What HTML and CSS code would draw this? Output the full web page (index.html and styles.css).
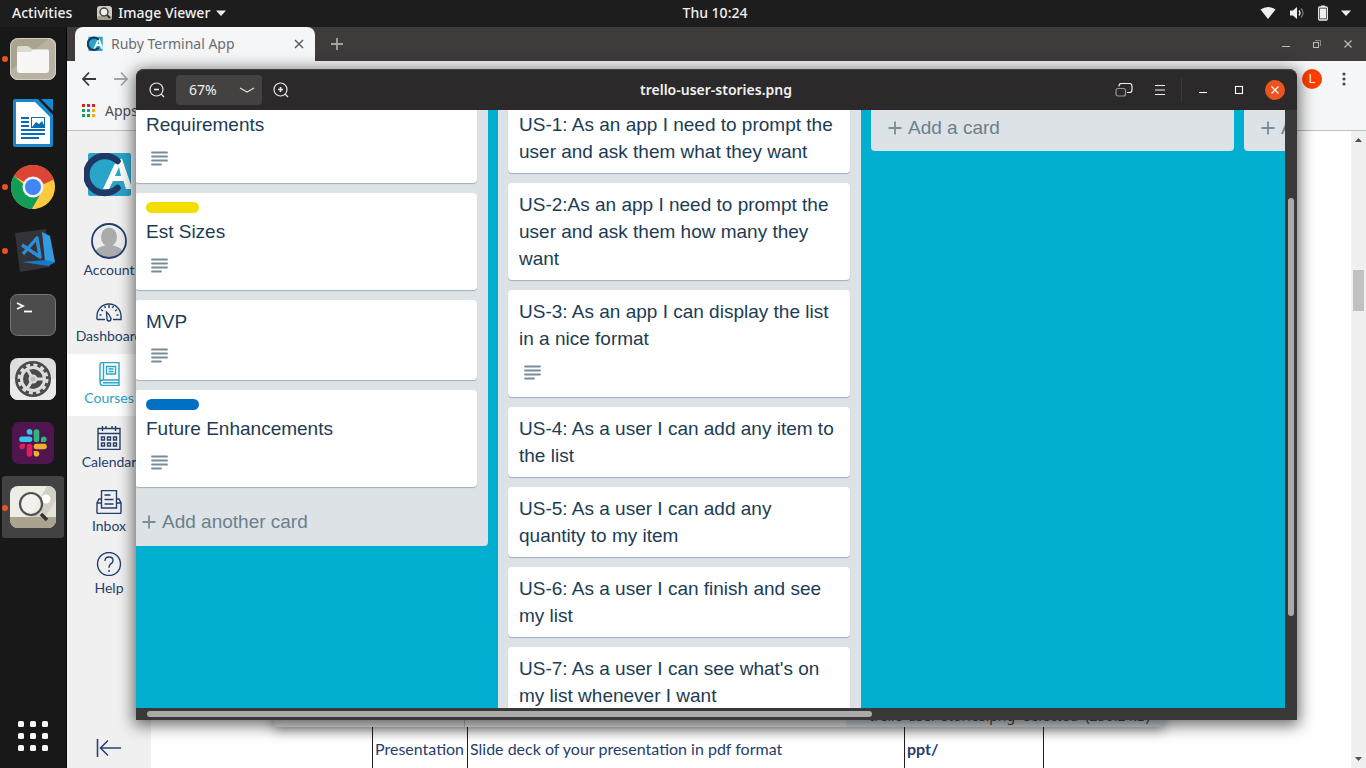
FILE: index.html
```html
<!DOCTYPE html>
<html lang="en">
<head>
<meta charset="utf-8">
<title>Desktop</title>
<link rel="stylesheet" href="styles.css">
</head>
<body>
<svg class="defs" aria-hidden="true">
  <symbol id="i-lines" viewBox="0 0 18 16"><path d="M1 1.500h15M1 5.500h15M1 9.500h15M1 13.500h9" stroke="#798d99" stroke-width="1.800" stroke-linecap="round"/></symbol>
  <symbol id="i-plus" viewBox="0 0 14 14"><path d="M7 0.500v13M0.500 7h13" stroke="#798d99" stroke-width="1.800"/></symbol>
  <symbol id="i-logo" viewBox="0 0 48 44">
    <rect x="4" y="0" width="43" height="43" rx="2" fill="#29a5c9"/>
    <path d="M19 36 33 6h5l9 26v4h-5l-2.500-8H29l-4 8z" fill="#fff"/><path d="M31 23h6l-2-9z" fill="#29a5c9"/>
    <path d="M33.500 8A18.500 18.500 0 1 0 33.500 35" fill="none" stroke="#1f3864" stroke-width="6.500" stroke-linecap="round"/>
  </symbol>
</svg>

<header class="topbar">
  <div class="topbar-left">
    <button class="bar-btn">Activities</button>
    <button class="bar-btn app-menu">
      <svg width="16" height="16" viewBox="0 0 16 16"><rect x="1" y="1" width="15" height="14" rx="3" fill="#cfcbc0"/><rect x="1" y="11" width="15" height="4" rx="2" fill="#a59f8e"/><circle cx="8" cy="7" r="4" fill="#eee" stroke="#444" stroke-width="1.500"/><path d="m11 10 3 3" stroke="#333" stroke-width="2"/></svg>
      Image Viewer
      <svg width="10" height="6" viewBox="0 0 10 6"><path d="M0 0.500h10L5 6z" fill="#eee"/></svg>
    </button>
  </div>
  <time class="clock">Thu 10:24</time>
  <div class="tray">
    <svg width="16" height="14" viewBox="0 0 16 14"><path d="M0.500 3.500Q8-1.500 15.500 3.500L8 13z" fill="#f0f0f0"/></svg>
    <svg width="16" height="14" viewBox="0 0 16 14"><path d="M1 4.500h3L8 1v12L4 9.500H1z" fill="#f0f0f0"/><path d="M10 4.500q2 2.500 0 5" fill="none" stroke="#eee" stroke-width="1.300"/><path d="M12 2.500q4 4.500 0 9" fill="none" stroke="#777" stroke-width="1.300"/></svg>
    <svg width="10" height="16" viewBox="0 0 10 16"><rect x="0.700" y="2" width="8.600" height="13" rx="1" fill="none" stroke="#eee" stroke-width="1.300"/><path d="M3 0.500h4V2H3zM2 3.500h6v10H2z" fill="#eee"/></svg>
    <svg width="10" height="6" viewBox="0 0 10 6"><path d="M0 0.500h10L5 6z" fill="#eee"/></svg>
  </div>
</header>

<div class="desktop">
  <nav class="dock" aria-label="Dock">
    <button class="dock-item running" aria-label="Files">
      <svg width="48" height="44" viewBox="0 0 48 44"><rect x="1" y="1" width="46" height="42" rx="8" fill="#aaa48f"/><path d="M1 34 40 1h1a7 7 0 0 1 6 8v26a8 8 0 0 1-8 8H9a8 8 0 0 1-8-8z" fill="#b7b2a1"/><rect x="1.500" y="1.500" width="45" height="41" rx="8" fill="none" stroke="#d4d0c2"/><path d="M8 11q0-2 2-2h9l4 3h15q2 0 2 2v6H8z" fill="#dcd9cf"/><path d="M8 15h14l2-2h14q2 0 2 2v18q0 3-3 3H11q-3 0-3-3z" fill="#f8f7f5"/></svg>
    </button>
    <button class="dock-item" aria-label="Writer">
      <svg width="40" height="48" viewBox="0 0 40 48"><path d="M2 0h23l15 16v30q0 2-2 2H2q-2 0-2-2V2q0-2 2-2z" fill="#1787cf"/><path d="M3 3h19l15 15v27H3z" fill="#fff"/><path d="M28 0h12v12z" fill="#1787cf"/><path d="M8 19h8M8 23h8M8 27h8M8 31h24M8 35h24M8 39h18" stroke="#0b6cb3" stroke-width="1.800"/><rect x="18.500" y="18.500" width="13" height="10" fill="#fff" stroke="#0b6cb3"/><path d="m19 28 4-5 3 2 3-3 3 6z" fill="#0b6cb3"/></svg>
    </button>
    <button class="dock-item running" aria-label="Chrome">
      <svg width="46" height="46" viewBox="0 0 46 46"><circle cx="23" cy="23" r="22" fill="#fdca3f"/><path d="M23 23 3.900 12A22 22 0 0 1 42.100 12z" fill="#dc4437"/><path d="M3.900 12A22 22 0 0 0 22 45l10.500-17H23z" fill="#129c58"/><path d="M23 12h19l1.600 3.600L34 20z" fill="#dc4437"/><path d="m31.600 28-9.600 17h4l8-19z" fill="#fdca3f"/><circle cx="23" cy="23" r="10.500" fill="#f2f2f2"/><circle cx="23" cy="23" r="8" fill="#4285f4"/></svg>
    </button>
    <button class="dock-item running" aria-label="Visual Studio Code">
      <svg width="44" height="46" viewBox="0 0 44 46"><path d="m4 5 31-4 4 38-30 5z" fill="#343338"/><path d="m31 4 8 4 5 26-7 4-3-5z" fill="#359be0"/><path d="m11 34 26 4 7-4-10-2z" fill="#1879c9"/><path d="m11 17 18 12-3-19-14 16" fill="none" stroke="#2a8fd8" stroke-width="3.400" stroke-linejoin="round"/></svg>
    </button>
    <button class="dock-item" aria-label="Terminal">
      <svg width="48" height="44" viewBox="0 0 48 44"><rect x="1.500" y="1.500" width="45" height="41" rx="7" fill="#4c4c4c" stroke="#777"/><path d="m8 10 6 3-6 3" fill="none" stroke="#fff" stroke-width="1.800"/><path d="M15 18.500h8" stroke="#fff" stroke-width="1.800"/></svg>
    </button>
    <button class="dock-item" aria-label="Settings">
      <svg width="48" height="44" viewBox="0 0 48 44"><rect x="1" y="1" width="46" height="42" rx="8" fill="#dedede"/><path d="M1 22h46v13a8 8 0 0 1-8 8H9a8 8 0 0 1-8-8z" fill="#ebebeb"/><circle cx="24" cy="22" r="18" fill="#4a4a4a"/><circle cx="24" cy="22" r="14" fill="none" stroke="#ddd" stroke-width="3" stroke-dasharray="4 3.330"/><circle cx="24" cy="22" r="11.500" fill="none" stroke="#ddd" stroke-width="3"/><circle cx="24" cy="22" r="4.500" fill="#ddd"/><path d="M24 22 18 12M24 22 18 32M24 22h12" stroke="#ddd" stroke-width="3"/><circle cx="24" cy="22" r="2.500" fill="#bbb"/></svg>
    </button>
    <button class="dock-item" aria-label="Slack">
      <svg width="42" height="42" viewBox="0 0 42 42"><rect width="42" height="42" rx="7" fill="#4f154f"/><g stroke-width="5.600" stroke-linecap="round"><path d="M10 17.300h7.500" stroke="#36c5f0"/><path d="M24.500 10v7.500" stroke="#2eb67d"/><path d="M24.500 24.500H32" stroke="#ecb22e"/><path d="M17.500 24.500V32" stroke="#e01e5a"/></g><path d="M20.300 12.500h-2.800a2.800 2.800 0 1 1 2.800-2.800z" fill="#36c5f0"/><path d="M29 20v-2.800a2.800 2.800 0 1 1 2.800 2.800z" fill="#2eb67d"/><path d="M21.700 29h2.800a2.800 2.800 0 1 1-2.800 2.800z" fill="#ecb22e"/><path d="M13 21.700v2.800a2.800 2.800 0 1 1-2.800-2.800z" fill="#e01e5a"/></svg>
    </button>
    <button class="dock-item running active" aria-label="Image Viewer">
      <svg width="48" height="44" viewBox="0 0 48 44"><rect x="1" y="1" width="46" height="42" rx="8" fill="#edece5"/><path d="M21 32 38 1h2a8 8 0 0 1 7 8v23z" fill="#d2cfc4"/><path d="m36 32 11-17v17z" fill="#e4e1d8"/><circle cx="37" cy="14" r="4.500" fill="#fff"/><path d="M1 32h46v3a8 8 0 0 1-8 8H9a8 8 0 0 1-8-8z" fill="#aaa38f"/><circle cx="22" cy="19" r="11" fill="#f4f3ef" fill-opacity=".8" stroke="#505050" stroke-width="2.200"/><path d="m32 29 6 6" stroke="#333" stroke-width="3.600"/></svg>
    </button>
    <button class="dock-item dock-apps" aria-label="Show applications">
      <svg width="32" height="32" viewBox="0 0 32 32" fill="#f7f7f7"><rect x="1" y="1" width="6" height="6" rx="1.500"/><rect x="13" y="1" width="6" height="6" rx="1.500"/><rect x="25" y="1" width="6" height="6" rx="1.500"/><rect x="1" y="13" width="6" height="6" rx="1.500"/><rect x="13" y="13" width="6" height="6" rx="1.500"/><rect x="25" y="13" width="6" height="6" rx="1.500"/><rect x="1" y="25" width="6" height="6" rx="1.500"/><rect x="13" y="25" width="6" height="6" rx="1.500"/><rect x="25" y="25" width="6" height="6" rx="1.500"/></svg>
    </button>
  </nav>

  <section class="browser" aria-label="Browser">
    <div class="tabstrip">
      <div class="tab">
        <svg width="16" height="16"><use href="#i-logo"/></svg>
        <span class="tab-title">Ruby Terminal App</span>
        <button class="icon-btn" aria-label="Close tab"><svg width="10" height="10" viewBox="0 0 10 10"><path d="m1 1 8 8M9 1 1 9" stroke="#5f6368" stroke-width="1.600"/></svg></button>
      </div>
      <button class="icon-btn new-tab" aria-label="New tab"><svg width="12" height="12" viewBox="0 0 12 12"><path d="M6 0v12M0 6h12" stroke="#a5a3a2" stroke-width="1.800"/></svg></button>
      <div class="win-controls">
        <button aria-label="Minimise"><svg width="10" height="10" viewBox="0 0 10 10"><path d="M1 7.500h8" stroke="#bbb"/></svg></button>
        <button aria-label="Restore"><svg width="10" height="10" viewBox="0 0 10 10" fill="none"><path d="M3 1.500h5.500V7" stroke="#888"/><rect x="1.500" y="3.500" width="5" height="5" stroke="#bbb"/></svg></button>
        <button aria-label="Close"><svg width="10" height="10" viewBox="0 0 10 10"><path d="m1.500 1.500 7 7M8.500 1.500l-7 7" stroke="#bbb" stroke-width="1.300"/></svg></button>
      </div>
    </div>
    <div class="toolbar">
      <button class="icon-btn" aria-label="Back"><svg width="16" height="16" viewBox="0 0 16 16"><path d="M8 1.500 2 8l6 6.500M2 8h13" fill="none" stroke="#36393d" stroke-width="1.800"/></svg></button>
      <button class="icon-btn" aria-label="Forward"><svg width="16" height="16" viewBox="0 0 16 16"><path d="m8 1.500 6 6.500-6 6.500M14 8H1" fill="none" stroke="#a4a5a7" stroke-width="1.800"/></svg></button>
      <span class="avatar">L</span>
      <button class="icon-btn" aria-label="Menu"><svg width="4" height="14" viewBox="0 0 4 14" fill="#474a4d"><circle cx="2" cy="2" r="1.600"/><circle cx="2" cy="7" r="1.600"/><circle cx="2" cy="12" r="1.600"/></svg></button>
    </div>
    <div class="bookmarks">
      <a href="#" class="bookmark">
        <svg width="14" height="14" viewBox="0 0 14 14"><path d="M0 0h3v3H0zM5 0h3v3H5zM10 0h3v3h-3z" fill="#ea1c1c"/><path d="M0 5h3v3H0zM0 10h3v3H0z" fill="#13a05a"/><path d="M5 5h3v3H5z" fill="#3b7df0"/><path d="M5 10h3v3H5z" fill="#13a05a"/><path d="M10 5h3v3h-3zM10 10h3v3h-3z" fill="#fbab05"/></svg>
        Apps
      </a>
    </div>
    <div class="page">
      <nav class="sidebar" aria-label="Global navigation">
        <a href="#" class="brand" aria-label="Home"><svg width="48" height="44"><use href="#i-logo"/></svg></a>
        <a href="#" class="side-item account"><svg width="36" height="36" viewBox="0 0 36 36"><clipPath id="c"><circle cx="18" cy="18" r="17"/></clipPath><circle cx="18" cy="18" r="17" fill="#ececec"/><g clip-path="url(#c)" fill="#ababab"><ellipse cx="18" cy="14" rx="8" ry="9.500"/><ellipse cx="18" cy="34" rx="16" ry="12"/></g><circle cx="18" cy="18" r="17" fill="none" stroke="#243e6c" stroke-width="1.800"/></svg>Account</a>
        <a href="#" class="side-item"><svg class="ic" viewBox="0 0 26 24"><path d="M1 19.500V16A12 12 0 0 1 25 16v3.500h-8M1 19.500h8"/><path d="M13 5v3M5 9.500l2 1.500M21 9.500 19 11M3.500 15h2M20.500 15h2M8.500 6l1 2M17.500 6l-1 2M10.500 12q3 2 4.500 6.500 0 2.500-2 2.500t-2-2.500z"/></svg>Dashboard</a>
        <a href="#" class="side-item current"><svg class="ic" viewBox="0 0 26 24"><path d="M4 20V3q0-2.500 2.500-2.500H23V18H6.500Q4 18 4 20.500T6.500 23.500H23V18M7.500 0.500V18M10.500 4.500h9v7.500h-9zM12.500 7h5M12.500 9.500h5M7 20.800h16"/></svg>Courses</a>
        <a href="#" class="side-item"><svg class="ic" viewBox="0 0 26 24"><path d="M2 2.500h22v21H2zM2 7.500h22M6.500 0v5M19.500 0v5M10 0v3M16 0v3M5.500 11h3v3h-3zM11.500 11h3v3h-3zM17.500 11h3v3h-3zM5.500 17h3v3h-3zM11.500 17h3v3h-3zM17.500 17h3v3h-3z"/></svg>Calendar</a>
        <a href="#" class="side-item"><svg class="ic" viewBox="0 0 26 24"><path d="M5.500 15V0.500h15V15M8.500 5h6M8.500 9.500h9M8.500 14h9M5.500 9H3L1 13v9.500q0 1 1 1h22q1 0 1-1V13l-2-4h-2.500M1 13h4.500v5h15v-5H25"/></svg>Inbox</a>
        <a href="#" class="side-item help"><svg class="ic" viewBox="0 0 26 24"><circle cx="13" cy="12" r="11.500"/><path d="M9 9q0-4 4-4t4 3.500q0 2-2 3.200-2 1.300-2 4M13 18v2"/></svg>Help</a>
        <button class="collapse" aria-label="Collapse navigation"><svg width="26" height="20" viewBox="0 0 26 20"><path d="M1.500 1v18M25 10H5M12 2.500 4.500 10l7.500 7.500" fill="none" stroke="#2a4270" stroke-width="1.600"/></svg></button>
      </nav>
      <main class="content">
        <table class="deliverables">
          <tr><td class="col-name">Presentation</td><td class="col-desc">Slide deck of your presentation in pdf format</td><td class="col-path"><b>ppt/</b></td></tr>
        </table>
      </main>
      <div class="page-scroll" aria-hidden="true">
        <svg width="7" height="4" viewBox="0 0 7 4"><path d="M0 4h7L3.500 0z" fill="#505050"/></svg>
        <div class="page-track"><div class="page-thumb"></div></div>
        <svg width="7" height="4" viewBox="0 0 7 4"><path d="M0 0h7L3.500 4z" fill="#505050"/></svg>
      </div>
    </div>
  </section>

  <section class="files-window" aria-label="Files">
    <div class="files-side"></div>
    <div class="files-status">“trello-user-stories.png” selected  (256.2 kB)</div>
  </section>

  <section class="viewer" aria-label="Image Viewer">
    <header class="viewer-bar">
      <div class="viewer-tools">
        <button class="tool" aria-label="Zoom out"><svg width="16" height="16" viewBox="0 0 16 16" fill="none" stroke="#e8e8e8" stroke-width="1.200"><circle cx="7.500" cy="7.500" r="6.500"/><path d="m12 12 3 3" /><path d="M5 7.500h5" stroke-width="1.600"/></svg></button>
        <label class="zoom-box"><select aria-label="Zoom level"><option>67%</option></select><svg width="16" height="6" viewBox="0 0 16 6"><path d="m1 1 7 4 7-4" fill="none" stroke="#ddd" stroke-width="1.200"/></svg></label>
        <button class="tool" aria-label="Zoom in"><svg width="16" height="16" viewBox="0 0 16 16" fill="none" stroke="#e8e8e8" stroke-width="1.200"><circle cx="7.500" cy="7.500" r="6.500"/><path d="m12 12 3 3"/><path d="M5 7.500h5M7.500 5v5" stroke-width="1.600"/></svg></button>
      </div>
      <h1 class="viewer-title">trello-user-stories.png</h1>
      <div class="viewer-tools end">
        <button class="tool" aria-label="Fullscreen"><svg width="18" height="14" viewBox="0 0 18 14" fill="none"><path d="M4 3.500V3q0-2.500 2.500-2.500h8Q17 0.500 17 3v4q0 2.500-2.500 2.500H12" stroke="#eee" stroke-width="1.200"/><rect x="1" y="5.500" width="9.500" height="7.500" rx="2" stroke="#999" stroke-width="1.200"/></svg></button>
        <button class="tool" aria-label="Menu"><svg width="12" height="10" viewBox="0 0 12 10"><path d="M1 0.500h10M1 5h10M1 9.500h10" stroke="#f4f4f4" stroke-width="1.100"/></svg></button>
        <span class="divider"></span>
        <button class="tool" aria-label="Minimise"><svg width="10" height="10" viewBox="0 0 10 10"><path d="M1 7.500h8" stroke="#fff" stroke-width="1.100"/></svg></button>
        <button class="tool" aria-label="Maximise"><svg width="10" height="10" viewBox="0 0 10 10"><rect x="1.500" y="1.500" width="7" height="7" fill="none" stroke="#fff" stroke-width="1.100"/></svg></button>
        <button class="tool" aria-label="Close"><svg width="20" height="20" viewBox="0 0 20 20"><circle cx="10" cy="10" r="10" fill="#e95420"/><path d="m6.500 6.500 7 7M13.500 6.500l-7 7" stroke="#fff" stroke-width="1.200"/></svg></button>
      </div>
    </header>
    <div class="viewer-body">
      <div class="board">
        <section class="list">
          <article class="card"><p>Requirements</p><svg class="desc"><use href="#i-lines"/></svg></article>
          <article class="card"><span class="label yellow"></span><p>Est Sizes</p><svg class="desc"><use href="#i-lines"/></svg></article>
          <article class="card"><p>MVP</p><svg class="desc"><use href="#i-lines"/></svg></article>
          <article class="card"><span class="label blue"></span><p>Future Enhancements</p><svg class="desc"><use href="#i-lines"/></svg></article>
          <button class="add another"><svg width="14" height="14"><use href="#i-plus"/></svg>Add another card</button>
        </section>
        <section class="list">
          <article class="card"><p>US-1: As an app I need to prompt the user and ask them what they want</p></article>
          <article class="card"><p>US-2:As an app I need to prompt the user and ask them how many they want</p></article>
          <article class="card"><p>US-3: As an app I can display the list in a nice format</p><svg class="desc"><use href="#i-lines"/></svg></article>
          <article class="card"><p>US-4: As a user I can add any item to the list</p></article>
          <article class="card"><p>US-5: As a user I can add any quantity to my item</p></article>
          <article class="card"><p>US-6: As a user I can finish and see my list</p></article>
          <article class="card"><p>US-7: As a user I can see what's on my list whenever I want</p></article>
        </section>
        <section class="list"><button class="add"><svg width="14" height="14"><use href="#i-plus"/></svg>Add a card</button></section>
        <section class="list"><button class="add"><svg width="14" height="14"><use href="#i-plus"/></svg>Add a card</button></section>
      </div>
      <div class="v-scroll"><div class="v-thumb"></div></div>
      <div class="h-scroll"><div class="h-thumb"></div></div>
    </div>
  </section>
</div>
</body>
</html>
```

FILE: styles.css
```css
* { box-sizing: border-box; }
body {
  margin: 0;
  height: 100vh;
  display: flex;
  flex-direction: column;
  overflow: hidden;
  font: 14px/20px "Noto Sans", "Open Sans", sans-serif;
}
button { border: 0; padding: 0; background: none; font: inherit; color: inherit; }
a { color: inherit; text-decoration: none; }
svg { flex: none; display: block; }
.defs { position: absolute; width: 0; height: 0; }

/* top bar */
.topbar {
  flex: none;
  display: grid;
  grid-template-columns: 1fr auto 1fr;
  align-items: center;
  height: 27px;
  padding: 0 15px 1px 12px;
  background: #1d1d1d;
  color: #f0f0f0;
  font-weight: 500;
}
.topbar-left, .app-menu, .tray { display: flex; align-items: center; }
.topbar-left { gap: 24px; }
.app-menu { gap: 6px; }
.clock { margin-left: 67px; }
.tray { justify-content: flex-end; gap: 13px; }

.desktop { flex: 1; min-height: 0; display: flex; }

/* dock */
.dock {
  flex: none;
  width: 67px;
  display: flex;
  flex-direction: column;
  background: #181818;
  border-right: 1px solid #050505;
}
.dock-item {
  height: 64px;
  padding-right: 1px;
  display: grid;
  place-items: center;
  position: relative;
}
.running::before {
  content: "";
  position: absolute;
  left: 2px;
  top: 29px;
  width: 6px;
  height: 6px;
  border-radius: 50%;
  background: #e95420;
}
.active { height: 62px; margin: 1px 2px; padding: 0; background: #424242; border-radius: 3px; }
.active::before { left: 0; }
.dock-apps { margin-top: auto; }

/* browser */
.browser { flex: 1; min-width: 0; display: flex; flex-direction: column; background: #f5f6f7; }
.tabstrip { flex: none; display: flex; height: 34px; padding: 0 3px 0 8px; background: #3f3b3a; }
.tab {
  display: flex;
  align-items: center;
  gap: 8px;
  width: 240px;
  padding: 0 11px 0 12px;
  background: #f5f6f7;
  border-radius: 8px 8px 0 0;
  color: #6a6d71;
}
.tab-title { flex: 1; white-space: nowrap; }
.new-tab { padding: 0 16px; }
.win-controls { margin-left: auto; display: flex; }
.win-controls button { width: 31px; display: grid; place-items: center; }
.toolbar { flex: none; display: flex; align-items: center; gap: 16px; height: 36px; padding: 0 20px 0 14px; }
.avatar {
  margin-left: auto;
  margin-right: 4px;
  width: 20px;
  height: 20px;
  border-radius: 50%;
  background: #ff3d00;
  color: #fff;
  font: 12px/20px Roboto, sans-serif;
  text-align: center;
}
.bookmarks { flex: none; height: 34px; padding: 4px 15px; border-bottom: 1px solid #b9c0c8; color: #4b4e52; }
.bookmark { display: flex; align-items: center; gap: 9px; }
.page { flex: 1; min-height: 0; display: flex; background: #fff; }

.sidebar {
  flex: none;
  width: 84px;
  display: flex;
  flex-direction: column;
  background: #f0f0f0;
  color: #243e6c;
  font: 14px/20px Lato, sans-serif;
}
.brand { height: 82px; padding: 22px 0 0 17px; }
.side-item { display: flex; flex-direction: column; align-items: center; padding: 10px 0 8px; gap: 2px; }
.side-item.current { background: #fff; color: #29a5c9; padding: 8px 0; }
.side-item.account { padding-bottom: 10px; gap: 1px; }
.side-item.help { padding-top: 8px; }
.ic { width: 26px; height: 24px; fill: none; stroke: currentColor; stroke-width: 1.4; }
.collapse { margin: auto 0 0; padding: 0 0 10px 29px; }

.content { flex: 1; display: flex; flex-direction: column; justify-content: flex-end; padding-left: 221px; }
.deliverables { width: 672px; border-collapse: collapse; color: #243e6c; font: 16px/20px Lato, sans-serif; }
.deliverables td { height: 60px; padding: 22px 2px 0; border: 1px solid #222; border-width: 0 1px; white-space: nowrap; }
.col-name { width: 95px; }
.col-path { width: 139px; }

.page-scroll { flex: none; width: 15px; display: flex; flex-direction: column; align-items: center; gap: 4px; padding: 7px 0; background: #f0f0f0; }
.page-track { flex: 1; padding-top: 124px; }
.page-thumb { width: 11px; height: 41px; background: #c1c1c1; }

/* file manager window */
.files-window {
  position: absolute;
  left: 274px;
  right: 202px;
  bottom: 41px;
  height: 240px;
  display: flex;
  align-items: flex-end;
  background: #e4e4e6;
  box-shadow: 0 3px 12px rgba(0, 0, 0, .4);
}
.files-side { width: 191px; align-self: stretch; border-right: 1px solid #b4b4b4; }
.files-status {
  margin-left: auto;
  width: 318px;
  padding: 0 12px 1px 18px;
  background: #cfd6dc;
  color: #444;
  white-space: pre;
  line-height: 20px;
}

/* image viewer window */
.viewer {
  position: absolute;
  inset: 69px 69px 48px 136px;
  display: flex;
  flex-direction: column;
  border-radius: 8px 8px 0 0;
  background: #393939;
  box-shadow: 0 3px 16px 2px rgba(0, 0, 0, .6);
}
.viewer-bar {
  flex: none;
  display: grid;
  grid-template-columns: 1fr auto 1fr;
  align-items: center;
  height: 41px;
  padding: 0 4px 0 3px;
  border-radius: 8px 8px 0 0;
  background: #2c292a;
  border-top: 1px solid #454344;
  color: #f2f2f2;
}
.viewer-tools { display: flex; align-items: center; }
.end { justify-content: flex-end; }
.tool { width: 36px; height: 36px; display: grid; place-items: center; }
.divider { width: 1px; height: 24px; margin: 0 3px; background: #3b3839; }
.viewer-title { margin: 0; font-size: 14px; font-weight: 600; }
.zoom-box {
  display: flex;
  align-items: center;
  width: 86px;
  height: 30px;
  margin: 0 1px;
  padding: 0 7px 0 13px;
  border-radius: 4px;
  background: #444240;
}
.zoom-box select { flex: 1; min-width: 0; appearance: none; border: 0; padding: 0; background: none; color: #f2f2f2; font: inherit; }
.viewer-body { flex: 1; min-height: 0; display: grid; grid-template: minmax(0, 1fr) 12px / minmax(0, 1fr) 12px; }
.board {
  overflow: hidden;
  display: flex;
  align-items: flex-start;
  gap: 10px;
  background: #00aecf;
  font: 19px/27px "Liberation Sans", Arial, sans-serif;
  color: #1b3c54;
}
.list {
  flex: none;
  display: flex;
  flex-direction: column;
  gap: 10px;
  width: 363px;
  margin-top: -7px;
  padding: 0 11px 0 10px;
  border-radius: 0 0 4px 4px;
  background: #dde2e6;
}
.list:first-child { margin-left: -11px; }
.card { padding: 8px 11px; border-radius: 4px; background: #fff; box-shadow: 0 1px 1px #9fb0ba; }
.card p { margin: 0; }
.label { display: block; width: 53px; height: 11px; margin: 1px 0 5px; border-radius: 6px; }
.yellow { background: #f2df00; }
.blue { background: #0070c4; }
.desc { width: 18px; height: 16px; margin: 13px 0 8px 5px; }
.add { display: flex; align-items: center; gap: 6px; padding: 11px 7px 10px; color: #6b808c; }
.another { padding: 11px 11px 11px 7px; }
.v-scroll { padding: 88px 3px 0; }
.v-thumb { height: 82%; max-height: 419px; border-radius: 3px; background: #aaa; }
.h-scroll { padding: 3px 0 3px 11px; }
.h-thumb { width: 64%; max-width: 725px; height: 6px; border-radius: 3px; background: #aaa; }
```
